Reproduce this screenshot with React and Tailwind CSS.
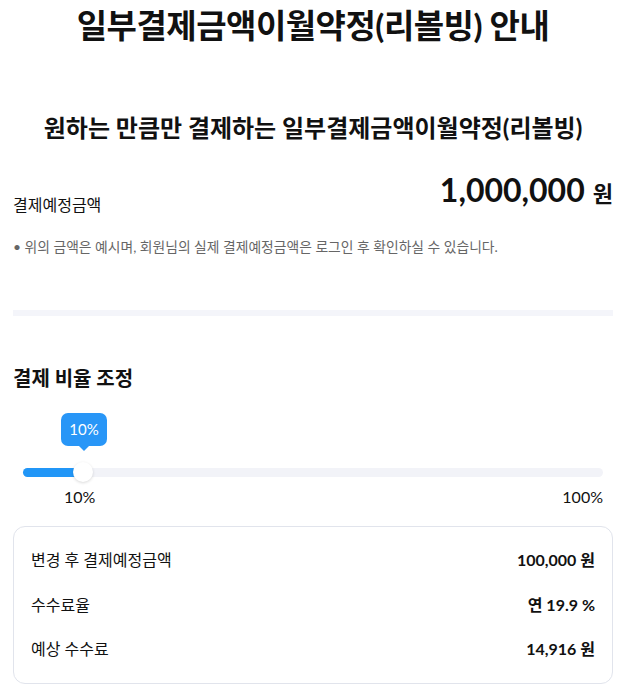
import React from "react";

const font = { fontFamily: '"Lato", "Noto Sans CJK KR", sans-serif' };

const rows = [
  { label: "변경 후 결제예정금액", value: "100,000 원" },
  { label: "수수료율", value: "연 19.9 %" },
  { label: "예상 수수료", value: "14,916 원" },
];

export default function App() {
  const percent = 10;
  return (
    <div className="min-h-screen bg-white text-[#111]" style={font}>
      <div className="px-[13px] w-[626px]">
        {/* Title */}
        <h1 className="pt-[5px] text-center text-[33px] font-bold leading-[40px] tracking-[-0.5px]">
          일부결제금액이월약정(리볼빙) 안내
        </h1>

        <h2 className="mt-[67px] text-center text-[24px] font-bold leading-[32px]">
          원하는 만큼만 결제하는 일부결제금액이월약정(리볼빙)
        </h2>

        {/* Amount */}
        <div className="mt-[26px] flex items-end justify-between">
          <span className="text-[16px] leading-[20px] mb-[1px]">결제예정금액</span>
          <span className="font-bold leading-[40px]">
            <span className="text-[32px]">1,000,000</span>
            <span className="text-[22px] ml-[8px]">원</span>
          </span>
        </div>

        <p className="mt-[21px] text-[13.8px] leading-[20px] text-[#666]">
          • 위의 금액은 예시며, 회원님의 실제 결제예정금액은 로그인 후 확인하실 수 있습니다.
        </p>

        <div className="mt-[53px] h-[6px] bg-[#f4f5fa]" />

        {/* Ratio */}
        <h3 className="mt-[48px] text-[20px] font-bold leading-[28px]">결제 비율 조정</h3>

        <div className="mt-[21px] px-[10px]">
          <div className="relative h-[70px]">
            <div className="absolute left-0 right-0 top-[55px] h-[9px] rounded-full bg-[#f2f3f8]" />
            <div
              className="absolute left-0 top-[55px] h-[9px] rounded-full bg-[#2196f7]"
              style={{ width: `${60 + 0 * percent}px` }}
            />
            <div className="absolute left-[50px] top-[49px] w-[20px] h-[20px] rounded-full bg-white shadow-[0_1px_3px_rgba(0,0,0,0.15)]" />
            <div className="absolute left-[38px] top-0 flex flex-col items-center">
              <div className="w-[46px] h-[33px] rounded-[7px] bg-[#2896f7] text-white text-[15px] flex items-center justify-center">
                10%
              </div>
              <div className="w-0 h-0 border-l-[5px] border-r-[5px] border-t-[5px] border-l-transparent border-r-transparent border-t-[#2896f7]" />
            </div>
          </div>
          <div className="mt-[3px] flex justify-between text-[16px] leading-[22px]">
            <span className="ml-[41px]">10%</span>
            <span>100%</span>
          </div>
        </div>

        {/* Result card */}
        <div className="mt-[18px] mb-[12px] rounded-[12px] border border-[#e1e4ec] px-[17px] py-[11px]">
          {rows.map((r) => (
            <div key={r.label} className="flex items-center justify-between h-[44.5px] text-[16px]">
              <span>{r.label}</span>
              <span className="font-bold">{r.value}</span>
            </div>
          ))}
        </div>
      </div>
    </div>
  );
}
